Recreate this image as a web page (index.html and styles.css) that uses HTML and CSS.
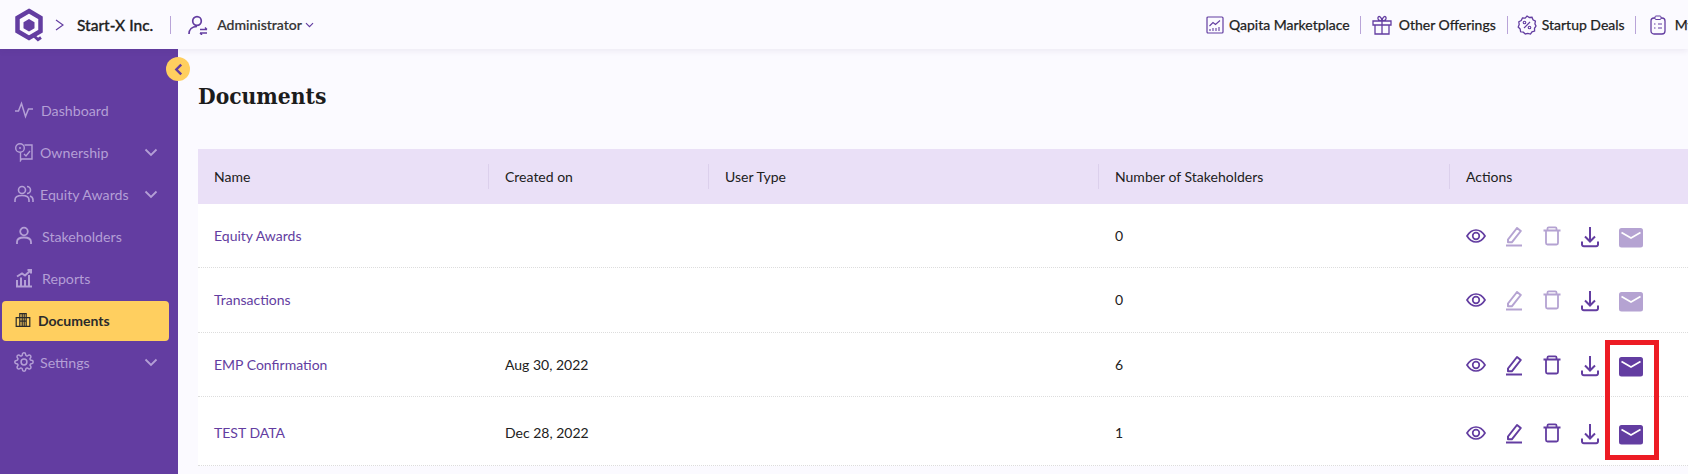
FILE: index.html
```html
<!DOCTYPE html>
<html lang="en">
<head>
<meta charset="utf-8">
<title>Documents</title>
<link rel="stylesheet" href="styles.css">
</head>
<body>
<svg class="defs" width="0" height="0" aria-hidden="true">
  <symbol id="eye" viewBox="0 0 20 16"><path d="M1 8c2.400-4 5.400-6 9-6s6.600 2 9 6c-2.400 4-5.400 6-9 6s-6.600-2-9-6z" fill="none" stroke="currentColor" stroke-width="1.700"/><circle cx="10" cy="8" r="3.300" fill="none" stroke="currentColor" stroke-width="1.700"/></symbol>
  <symbol id="edit" viewBox="0 0 20 22"><path d="M4 14.500 13 3l3.800 3-9 11.300H4z" fill="none" stroke="currentColor" stroke-width="2" stroke-linejoin="round"/><path d="M2 20.500h16" stroke="currentColor" stroke-width="2"/></symbol>
  <symbol id="trash" viewBox="0 0 20 20"><path d="M1.500 4.500h17M4 4.500v12.500a1.500 1.500 0 0 0 1.500 1.500h9a1.500 1.500 0 0 0 1.500-1.500V4.500M5.500 4.500V2.500A1.200 1.200 0 0 1 6.700 1.300h6.600a1.200 1.200 0 0 1 1.200 1.200v2" fill="none" stroke="currentColor" stroke-width="1.800"/></symbol>
  <symbol id="download" viewBox="0 0 20 22"><path d="M10 1v14M5 10.500l5 5 5-5" fill="none" stroke="currentColor" stroke-width="2"/><path d="M2 15.500v3a1.800 1.800 0 0 0 1.800 1.800h12.400a1.800 1.800 0 0 0 1.800-1.800v-3" fill="none" stroke="currentColor" stroke-width="2"/></symbol>
  <symbol id="mail" viewBox="0 0 24 20"><rect width="24" height="19.500" rx="2.500" fill="currentColor"/><path d="M2.500 4.500 12 10l9.500-5.500" fill="none" stroke="#fff" stroke-width="1.700"/></symbol>
  <symbol id="chev" viewBox="0 0 14 9"><path d="M1.500 1.500 7 7l5.500-5.500" fill="none" stroke="currentColor" stroke-width="1.800"/></symbol>
</svg>

<header class="topbar">
  <div class="top-left">
    <svg class="logo" viewBox="0 0 30 34"><path d="M15 3 26.500 9.800v13.400L15 30 3.500 23.200V9.800z" fill="none" stroke="#633da1" stroke-width="4.500"/><path d="M15 11l5.500 3.200v6L15 23.400l-5.500-3.200v-6z" fill="#633da1"/><path d="M19 27l5 4.500 3-2" fill="none" stroke="#633da1" stroke-width="3"/></svg>
    <svg class="crumb" viewBox="0 0 9 12"><path d="M1 1l7 5-7 5" fill="none" stroke="#633da1" stroke-width="1.200"/></svg>
    <span class="company">Start-X Inc.</span>
    <span class="vsep vsep-left"></span>
    <svg class="role-icon" viewBox="0 0 20 20"><circle cx="9" cy="6" r="4.300" fill="none" stroke="#633da1" stroke-width="1.700"/><path d="M1 19c0-4.500 3-7.500 8-7.500" fill="none" stroke="#633da1" stroke-width="1.700"/><path d="M12 14.500h7M19 14.500l-2-2M12 18h7M12 18l2 2" fill="none" stroke="#633da1" stroke-width="1.400"/></svg>
    <span class="role">Administrator</span>
    <svg class="role-chev"><use href="#chev"/></svg>
  </div>
  <nav class="top-right">
    <svg class="top-icon ic-a" viewBox="0 0 18 18"><rect x="1" y="1" width="16" height="16" rx="1" fill="none" stroke="#633da1" stroke-width="1.200"/><path d="M3.500 10 7 6.500l2.500 2L14 4.500M4 15v-2M7 15v-3M10 15v-3M13 15v-4" fill="none" stroke="#633da1" stroke-width="1.100"/></svg>
    <span class="top-link link-a">Qapita Marketplace</span><span class="vsep"></span>
    <svg class="top-icon ic-b" viewBox="0 0 20 20"><path d="M1 6h18v4H1zM3 10v9h14v-9M10 6v13M10 6C7 6 5.500 4.500 6 2.500S9.500 1.500 10 6c.5-4.500 3.500-5.500 4-3.500S13 6 10 6z" fill="none" stroke="#633da1" stroke-width="1.300"/></svg>
    <span class="top-link link-b">Other Offerings</span><span class="vsep"></span>
    <svg class="top-icon ic-c" viewBox="0 0 20 20"><path d="M10 1l2.300 1.500 2.700-.2 1 2.500 2.400 1.300-.5 2.700L19 11l-1.500 2.300.1 2.700-2.600.8-1.500 2.300-2.600-.7L8.300 19l-2-1.800-2.700-.4-.4-2.700L1.200 12l1-2.500-.4-2.700 2.400-1.300L5.500 3l2.700.1z" fill="none" stroke="#633da1" stroke-width="1.300"/><path d="M7 13l6-6" stroke="#633da1" stroke-width="1.200"/><circle cx="7.500" cy="7.500" r="1.300" fill="none" stroke="#633da1" stroke-width="1.100"/><circle cx="12.500" cy="12.500" r="1.300" fill="none" stroke="#633da1" stroke-width="1.100"/></svg>
    <span class="top-link link-c">Startup Deals</span><span class="vsep"></span>
    <svg class="top-icon clip" viewBox="0 0 16 20"><rect x="1" y="3" width="14" height="16" rx="3" fill="none" stroke="#633da1" stroke-width="1.300"/><rect x="5" y="1" width="6" height="3.500" rx="1" fill="#fbfaff" stroke="#633da1"/><path d="M4 9h1.500M8 9h4M4 13h1.500M8 13h4" stroke="#633da1"/></svg>
    <span class="top-link link-d">My Tasks</span>
  </nav>
</header>

<div class="shell">
  <aside class="sidebar">
    <button class="toggle" aria-label="Collapse sidebar"><svg viewBox="0 0 8 12"><path d="M6.500 1.500 2 6l4.500 4.500" fill="none" stroke="#633da1" stroke-width="2.200"/></svg></button>
    <ul class="nav">
      <li class="nav-item"><svg class="nav-icon" viewBox="0 0 20 20"><path d="M1 11h3.500L7.500 3.500l4 13 3-7.500H19" fill="none" stroke="currentColor" stroke-width="1.500"/></svg><span class="nav-text shift-1">Dashboard</span></li>
      <li class="nav-item"><svg class="nav-icon" viewBox="0 0 20 20"><circle cx="6" cy="6" r="4.300" fill="none" stroke="currentColor" stroke-width="1.400"/><circle cx="6" cy="6" r="1" fill="currentColor"/><path d="M10.500 3H18v14H7.500l-1 1.500V10.500M10 12l2 2 4-5" fill="none" stroke="currentColor" stroke-width="1.400"/></svg><span class="nav-text">Ownership</span><svg class="nav-chev"><use href="#chev"/></svg></li>
      <li class="nav-item"><svg class="nav-icon" viewBox="0 0 20 20"><circle cx="8" cy="6" r="3.500" fill="none" stroke="currentColor" stroke-width="1.600"/><path d="M1 18v-2c0-3 2.500-4.500 7-4.500s7 1.500 7 4.500v2M13 2.500a3.500 3.500 0 0 1 0 7M16 12c2 .7 3 2 3 4v2" fill="none" stroke="currentColor" stroke-width="1.600"/></svg><span class="nav-text">Equity Awards</span><svg class="nav-chev"><use href="#chev"/></svg></li>
      <li class="nav-item"><svg class="nav-icon" viewBox="0 0 20 20"><circle cx="10" cy="5.500" r="3.800" fill="none" stroke="currentColor" stroke-width="1.800"/><path d="M3 18v-2c0-2.800 2.500-4.500 7-4.500s7 1.700 7 4.500v2" fill="none" stroke="currentColor" stroke-width="1.800"/></svg><span class="nav-text shift-2">Stakeholders</span></li>
      <li class="nav-item"><svg class="nav-icon" viewBox="0 0 20 20"><path d="M3 12v6M7 9.500V18M11 12v6M15 7v11M2 18.500h16M3 8.500l5-3 3 2 5.500-5M13.500 2H17v3.500" fill="none" stroke="currentColor" stroke-width="2"/></svg><span class="nav-text shift-2">Reports</span></li>
      <li class="nav-item active"><svg class="nav-icon" viewBox="0 0 20 20"><path d="M1.500 7h4.500v11H1.500zM6 2h8v16H6zM14 7h4.500v11H14zM9 2v16M11.500 2v16M6 7h8M6 11.500h8" fill="none" stroke="currentColor" stroke-width="1.500"/></svg><span class="nav-text">Documents</span></li>
      <li class="nav-item"><svg class="nav-icon" viewBox="0 0 24 24"><circle cx="12" cy="12" r="3.500" fill="none" stroke="currentColor" stroke-width="1.800"/><path d="M19.400 15a1.650 1.650 0 0 0 .33 1.820l.06.06a2 2 0 0 1 0 2.830 2 2 0 0 1-2.830 0l-.06-.06a1.650 1.650 0 0 0-1.820-.33 1.650 1.650 0 0 0-1 1.510V21a2 2 0 0 1-2 2 2 2 0 0 1-2-2v-.09A1.650 1.650 0 0 0 9 19.400a1.650 1.650 0 0 0-1.820.33l-.06.06a2 2 0 0 1-2.830 0 2 2 0 0 1 0-2.830l.06-.06a1.650 1.650 0 0 0 .33-1.820 1.650 1.650 0 0 0-1.510-1H3a2 2 0 0 1-2-2 2 2 0 0 1 2-2h.09A1.650 1.650 0 0 0 4.600 9a1.650 1.650 0 0 0-.33-1.820l-.06-.06a2 2 0 0 1 0-2.830 2 2 0 0 1 2.830 0l.06.06a1.650 1.650 0 0 0 1.820.33H9a1.650 1.650 0 0 0 1-1.510V3a2 2 0 0 1 2-2 2 2 0 0 1 2 2v.09a1.650 1.650 0 0 0 1 1.510 1.650 1.650 0 0 0 1.820-.33l.06-.06a2 2 0 0 1 2.830 0 2 2 0 0 1 0 2.830l-.06.06a1.650 1.650 0 0 0-.33 1.820V9a1.650 1.650 0 0 0 1.510 1H21a2 2 0 0 1 2 2 2 2 0 0 1-2 2h-.09a1.650 1.650 0 0 0-1.510 1z" fill="none" stroke="currentColor" stroke-width="1.800"/></svg><span class="nav-text">Settings</span><svg class="nav-chev"><use href="#chev"/></svg></li>
    </ul>
  </aside>

  <main class="main">
    <h1 class="title">Documents</h1>
    <div class="table">
      <div class="row head">
        <div class="cell">Name</div><div class="cell">Created on</div><div class="cell">User Type</div><div class="cell">Number of Stakeholders</div><div class="cell">Actions</div>
      </div>
      <div class="row r1">
        <div class="cell name">Equity Awards</div><div class="cell"></div><div class="cell"></div><div class="cell">0</div>
        <div class="cell actions">
          <svg class="act"><use href="#eye"/></svg><svg class="act off"><use href="#edit"/></svg><svg class="act off"><use href="#trash"/></svg><svg class="act low"><use href="#download"/></svg><svg class="act mail off"><use href="#mail"/></svg>
        </div>
      </div>
      <div class="row r2">
        <div class="cell name">Transactions</div><div class="cell"></div><div class="cell"></div><div class="cell">0</div>
        <div class="cell actions">
          <svg class="act"><use href="#eye"/></svg><svg class="act off"><use href="#edit"/></svg><svg class="act off"><use href="#trash"/></svg><svg class="act low"><use href="#download"/></svg><svg class="act mail off"><use href="#mail"/></svg>
        </div>
      </div>
      <div class="row r3">
        <div class="cell name">EMP Confirmation</div><div class="cell">Aug 30, 2022</div><div class="cell"></div><div class="cell">6</div>
        <div class="cell actions">
          <svg class="act"><use href="#eye"/></svg><svg class="act"><use href="#edit"/></svg><svg class="act"><use href="#trash"/></svg><svg class="act low"><use href="#download"/></svg><svg class="act mail"><use href="#mail"/></svg>
        </div>
      </div>
      <div class="row r4">
        <div class="cell name">TEST DATA</div><div class="cell">Dec 28, 2022</div><div class="cell"></div><div class="cell">1</div>
        <div class="cell actions">
          <svg class="act"><use href="#eye"/></svg><svg class="act"><use href="#edit"/></svg><svg class="act"><use href="#trash"/></svg><svg class="act low"><use href="#download"/></svg><svg class="act mail"><use href="#mail"/></svg>
        </div>
      </div>
    </div>
  </main>
</div>
<div class="callout"></div>
</body>
</html>
```

FILE: styles.css
```css
* { box-sizing: border-box; }
html, body { margin: 0; height: 100%; overflow: hidden; }
body { position: relative; font-family: Lato, "Noto Sans", sans-serif; color: #212121; background: #fbfaff; }
.defs { position: absolute; }

.topbar { position: relative; z-index: 2; height: 49px; display: flex; align-items: center; justify-content: flex-start; background: #fbfaff; box-shadow: 0 2px 6px rgba(60, 40, 100, .08); white-space: nowrap; overflow: visible; }
.top-left { display: flex; align-items: center; padding-left: 14px; }
.logo { width: 30px; height: 34px; }
.crumb { width: 9px; height: 12px; margin-left: 11px; }
.company { margin-left: 13px; font-size: 15.500px; font-weight: 500; -webkit-text-stroke: .3px #212121; }
.vsep { width: 1px; height: 18px; background: #b9a4d8; flex: none; }
.vsep-left { margin-left: 17px; }
.role-icon { width: 20px; height: 20px; margin-left: 17px; }
.role { margin-left: 9px; font-size: 14px; font-weight: 500; color: #333; -webkit-text-stroke: .2px #333; }
.role-chev { width: 9px; height: 6px; margin-left: 3px; color: #633da1; }

.top-right { position: absolute; left: 1206px; top: 0; height: 49px; display: flex; align-items: center; font-size: 14px; }
.top-icon { flex: none; }
.ic-a { width: 18px; height: 18px; }
.ic-b { width: 20px; height: 20px; margin-left: 11px; }
.ic-c { width: 20px; height: 20px; margin-left: 9px; }
.clip { width: 16px; height: 20px; margin-left: 14px; }
.top-link { -webkit-text-stroke: .25px #212121; }
.link-a { margin-left: 5px; margin-right: 10px; }
.link-b { margin-left: 7px; margin-right: 11px; }
.link-c { margin-left: 5px; margin-right: 10px; }
.link-d { margin-left: 9px; }

.shell { display: flex; height: 425px; }
.sidebar { position: relative; width: 178px; flex: none; background: #633da1; padding-top: 42px; }
.toggle { position: absolute; left: 166px; top: 8px; width: 24px; height: 24px; padding: 0; border: 0; border-radius: 50%; background: #ffcf5f; display: flex; align-items: center; justify-content: center; }
.toggle svg { width: 9px; height: 13px; }
.nav { list-style: none; margin: 0; padding: 0; display: flex; flex-direction: column; gap: 2px; }
.nav-item { height: 40px; margin: 0 9px 0 2px; padding: 0 12px 2px; border-radius: 4px; display: flex; align-items: center; font-size: 14.200px; color: #b49fd6; }
.nav-icon { width: 20px; height: 20px; flex: none; margin-right: 6px; }
.nav-chev { width: 14px; height: 9px; margin-left: auto; margin-right: -1px; color: #b49fd6; }
.shift-1 { margin-left: 1px; }
.shift-2 { margin-left: 2px; }
.active { background: #ffcf5f; color: #2b2b2b; font-size: 14px; font-weight: 700; }
.active .nav-icon { width: 16px; height: 16px; margin: 0 7px 0 1px; }

.main { flex: 1; min-width: 0; padding-left: 20px; }
.title { margin: 0; height: 100px; padding-top: 30px; font-family: "DejaVu Serif", serif; font-size: 22.600px; font-stretch: condensed; font-weight: 700; line-height: 34px; color: #1c1c1c; }
.table { width: 1490px; background: #fff; }
.row { display: grid; grid-template-columns: 290px 220px 390px 351px 239px; align-items: center; font-size: 14px; border-bottom: 1px dotted #ddd; }
.head { height: 55px; background: #eae0f7; border-bottom: 0; }
.head .cell + .cell { border-left: 1px solid #dcd0ec; padding-left: 16px; }
.head .cell { height: 25px; line-height: 26px; }
.r1 { height: 64px; }
.r2 { height: 65px; padding-bottom: 1px; }
.r3 { height: 64px; }
.r4 { height: 69px; padding-top: 3px; }
.cell { padding-left: 16px; white-space: nowrap; }
.cell + .cell { padding-left: 17px; }
.name { color: #633da1; }
.actions { display: flex; align-items: center; gap: 18px; color: #633da1; }
.act { width: 20px; height: 22px; flex: none; }
.off { opacity: .47; }
.low { position: relative; top: 1px; }
.mail { width: 24px; height: 20px; margin-left: 1px; position: relative; top: 2px; }
.callout { position: absolute; left: 1605px; top: 340px; width: 54px; height: 120px; border: 5px solid #ed1c24; }
```
